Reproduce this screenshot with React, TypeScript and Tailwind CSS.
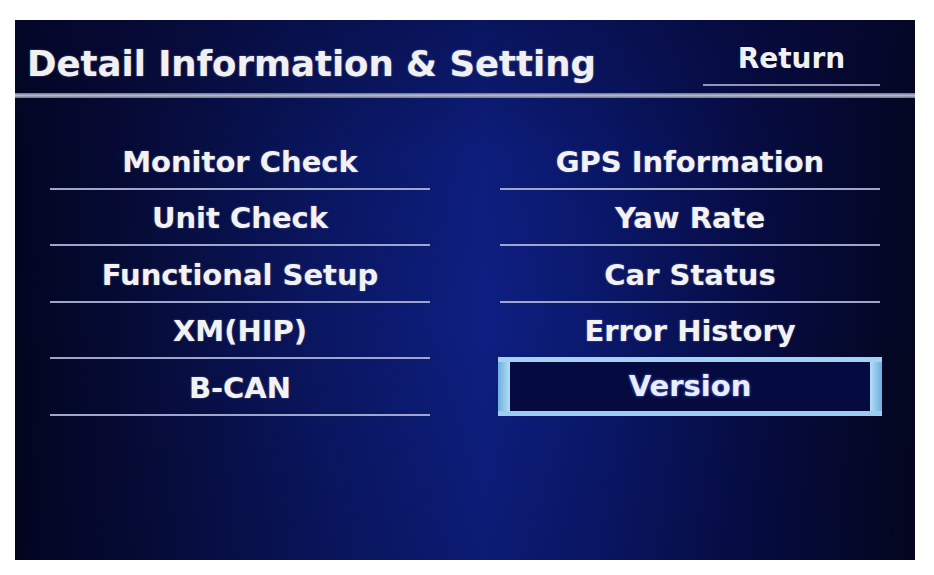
const leftItems = ['Monitor Check', 'Unit Check', 'Functional Setup', 'XM(HIP)', 'B-CAN'];
const rightItems = ['GPS Information', 'Yaw Rate', 'Car Status', 'Error History', 'Version'];

const MenuRow = ({ label, selected }: { label: string; selected?: boolean }) => {
  if (selected) {
    return (
      <div className="h-[56.5px] -mx-[2px] relative">
        <div className="absolute inset-x-0 -top-[2px] h-[59px] bg-[linear-gradient(to_right,#6eaedc_0%,#b0dcf6_3%,#8cc4ea_50%,#b0dcf6_97%,#6eaedc_100%)]">
          <div className="absolute inset-x-0 top-0 h-[5px] bg-[#a4d2f2]" />
          <div className="absolute inset-x-0 bottom-0 h-[5px] bg-[#9ccdf0]" />
          <div className="absolute left-[12px] right-[12px] top-[5px] bottom-[5px] bg-[#050a40] flex items-center justify-center">
            <span className="text-[29px] font-bold text-[#e8eeff] [text-shadow:0_0_3px_#5a78ff]">
              {label}
            </span>
          </div>
        </div>
      </div>
    );
  }
  return (
    <div className="h-[56.5px] border-b-2 border-[#9ea6cc] flex items-center justify-center pt-[4px]">
      <span className="text-[29px] font-bold text-[#f2f2f4] [text-shadow:0_0_2px_rgba(255,255,255,0.35)]">
        {label}
      </span>
    </div>
  );
};

export default function App() {
  return (
    <div className="w-full h-[575px] bg-white pt-[20px] pl-[15px] font-['DejaVu_Sans',sans-serif]">
      <div className="w-[900px] h-[540px] relative overflow-hidden bg-[linear-gradient(to_right,#020520_0%,#060c3a_15%,#0a1764_35%,#0d1f82_52%,#0a186c_65%,#060c44_82%,#03061f_100%)]">
        {/* vertical shading */}
        <div className="absolute inset-0 bg-[linear-gradient(to_bottom,rgba(6,8,50,0.45)_0%,rgba(6,8,50,0.08)_25%,rgba(4,6,40,0)_55%,rgba(2,4,30,0.15)_100%)]" />

        <div className="relative">
          {/* Header */}
          <div className="h-[73px] flex items-end justify-between">
            <h1 className="pl-[12px] pb-[12px] text-[35.5px] leading-none font-bold text-[#f0f0f2] [text-shadow:0_0_2px_rgba(255,255,255,0.4)]">
              Detail Information &amp; Setting
            </h1>
            <div className="mr-[35px] mb-[7px] w-[177px] border-b-2 border-[#8f96b8] flex justify-center pb-[11px]">
              <span className="text-[28px] leading-none font-bold text-[#f0f0f2]">Return</span>
            </div>
          </div>
          <div className="h-[5px] bg-[linear-gradient(to_bottom,#70748c,#b4b8c8_50%,#70748c)]" />

          {/* Menu */}
          <div className="grid grid-cols-2 gap-x-[70px] px-[35px] pt-[35px]">
            <div className="flex flex-col">
              {leftItems.map((item) => (
                <MenuRow key={item} label={item} />
              ))}
            </div>
            <div className="flex flex-col">
              {rightItems.map((item) => (
                <MenuRow key={item} label={item} selected={item === 'Version'} />
              ))}
            </div>
          </div>
        </div>
      </div>
    </div>
  );
}
